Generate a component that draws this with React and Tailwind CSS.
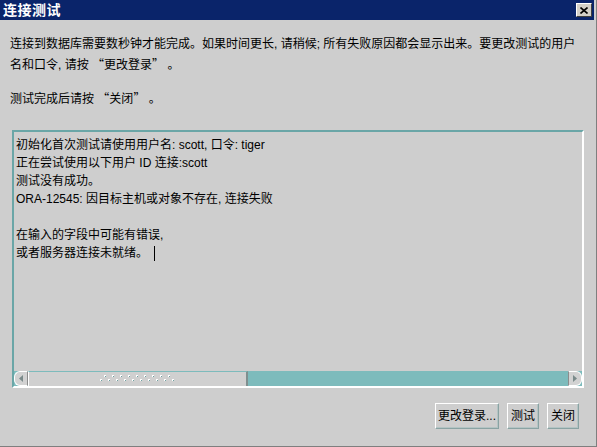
import React from 'react';

const font = { fontFamily: '"Liberation Sans", "Noto Sans CJK SC", sans-serif' };

const CloseButton = () => (
  <div className="w-[16px] h-[14px] bg-[#d4d0c8] border-t border-l border-white border-r border-b border-r-[#404040] border-b-[#404040] flex items-center justify-center">
    <svg width="8" height="7" viewBox="0 0 8 7">
      <path d="M0.5 0.5 L7.5 6.5 M7.5 0.5 L0.5 6.5" stroke="#000" strokeWidth="1.6" />
    </svg>
  </div>
);

const Button = ({ children, className = '' }) => (
  <button
    type="button"
    className={`h-[26px] px-0 whitespace-nowrap text-[12px] text-black bg-[#cecece] border border-t-white border-l-white border-r-[#8aa3a3] border-b-[#8aa3a3] shadow-[inset_-1px_-1px_0_#b4c4c4] ${className}`}
  >
    {children}
  </button>
);

const Grip = () => (
  <svg width="76" height="8" viewBox="0 0 76 8">
    {[0, 1, 2, 3, 4, 5, 6, 7, 8].map((i) => (
      <g key={i}>
        <rect x={4 + i * 8} y={0} width="2" height="2" fill="#ffffff" />
        <rect x={5 + i * 8} y={1} width="1" height="1" fill="#6f9f9f" />
        <rect x={0 + i * 8} y={4} width="2" height="2" fill="#ffffff" />
        <rect x={1 + i * 8} y={5} width="1" height="1" fill="#6f9f9f" />
      </g>
    ))}
    <rect x={72} y={4} width="2" height="2" fill="#ffffff" />
    <rect x={73} y={5} width="1" height="1" fill="#6f9f9f" />
  </svg>
);

const Scrollbar = () => (
  <div className="h-[15px] flex bg-[#7dbbbc]">
    <div className="w-[14px] h-full bg-[#d2d2d2] rounded-l-[6px] border border-white border-r-[#8c8c8c] flex items-center justify-center">
      <svg width="4" height="7" viewBox="0 0 4 7">
        <path d="M4 0 L0 3.5 L4 7 Z" fill="#7a8a8a" />
      </svg>
    </div>
    <div className="w-[220px] h-full bg-[#d0d0d0] border-t border-l border-t-[#7dbbbc] border-l-white border-r-2 border-r-[#7f8f8f] flex items-center justify-center">
      <Grip />
    </div>
    <div className="flex-1" />
    <div className="w-[14px] h-full bg-[#d2d2d2] rounded-r-[6px] border border-white border-l-[#8c8c8c] flex items-center justify-center">
      <svg width="4" height="7" viewBox="0 0 4 7">
        <path d="M0 0 L4 3.5 L0 7 Z" fill="#7a8a8a" />
      </svg>
    </div>
  </div>
);

const Q = ({ children }) => (
  <span className="leading-none" style={{ fontFamily: '"Noto Sans CJK SC", sans-serif' }}>{children}</span>
);

const lines = [
  '初始化首次测试请使用用户名: scott, 口令: tiger',
  '正在尝试使用以下用户 ID 连接:scott',
  '测试没有成功。',
  'ORA-12545: 因目标主机或对象不存在, 连接失败',
  '',
  '在输入的字段中可能有错误,',
];

export default function App() {
  return (
    <div
      className="w-[597px] h-[447px] bg-[#cecece] border-r border-b border-[#7f7f7f] flex flex-col pr-[2px] overflow-hidden"
      style={font}
    >
      {/* Title bar */}
      <div className="h-[20px] bg-[#0a246a] flex items-center justify-between pl-[3px] pr-[2px]">
        <span className="text-white font-bold text-[14px] leading-none tracking-[0.5px]">连接测试</span>
        <CloseButton />
      </div>

      {/* Intro text */}
      <div className="pl-[10px] pt-[14px] text-[12px] leading-[21px] text-black whitespace-nowrap">
        <div className="h-[21px]">连接到数据库需要数秒钟才能完成。如果时间更长, 请稍候; 所有失败原因都会显示出来。要更改测试的用户</div>
        <div className="h-[21px]">名和口令, 请按 <Q>“</Q>更改登录<Q>”</Q> 。</div>
        <div className="h-[21px] mt-[13px]">测试完成后请按 <Q>“</Q>关闭<Q>”</Q> 。</div>
      </div>

      {/* Output area */}
      <div className="ml-[12px] mt-[20px] w-[572px] h-[258px] border-t-2 border-l-2 border-t-[#6aa6a7] border-l-[#6aa6a7] border-b-2 border-r-2 border-b-white border-r-white flex flex-col">
        <div className="flex-1 pl-[2px] pt-[4px] text-[12px] leading-[18px] text-black whitespace-nowrap">
          {lines.map((l, i) => (
            <div key={i} className="h-[18px]">{l}</div>
          ))}
          <div className="h-[18px] flex items-center">
            <span>或者服务器连接未就绪。</span>
            <span className="ml-[6px] w-px h-[15px] bg-black" />
          </div>
        </div>
        <Scrollbar />
      </div>

      {/* Buttons */}
      <div className="flex justify-end gap-[8px] pr-[15px] mt-[15px]">
        <Button className="w-[64px]">更改登录...</Button>
        <Button className="w-[32px]">测试</Button>
        <Button className="w-[32px]">关闭</Button>
      </div>
    </div>
  );
}
